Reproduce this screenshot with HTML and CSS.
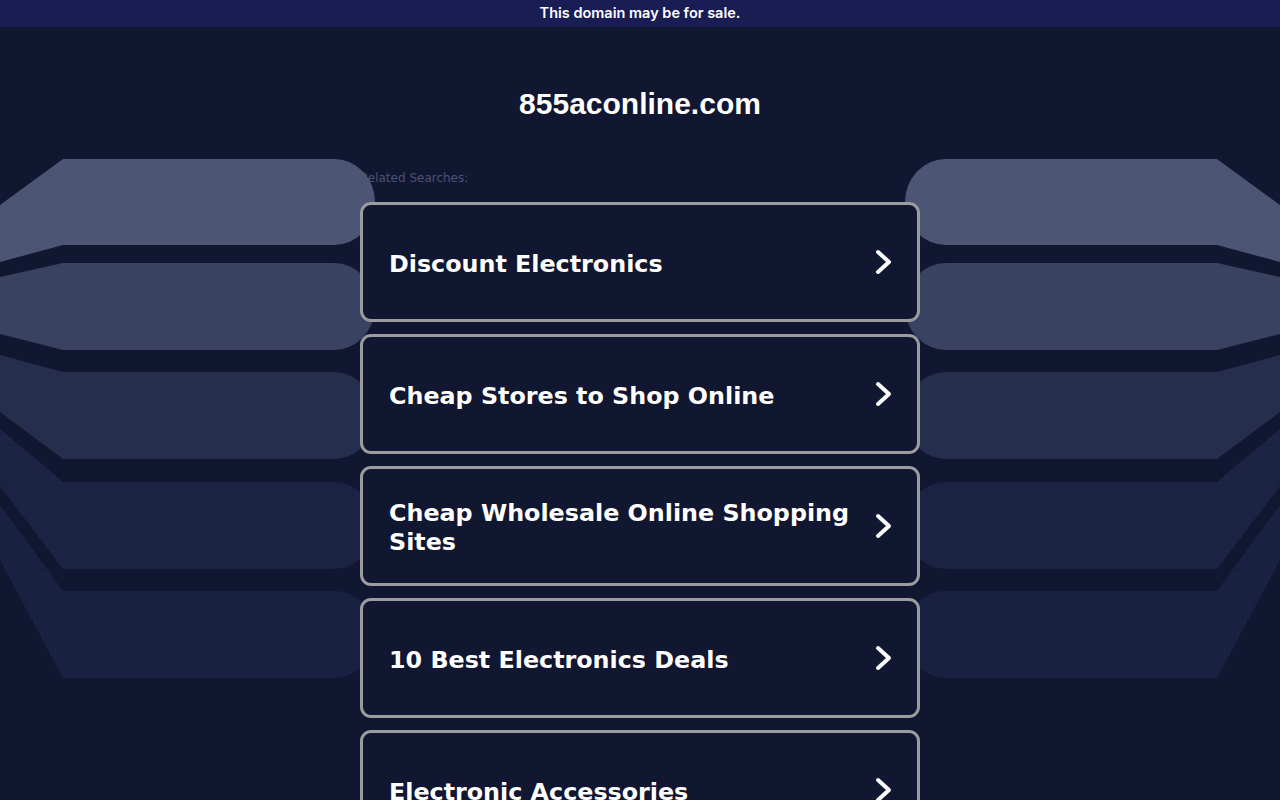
FILE: index.html
```html
<!DOCTYPE html>
<html lang="en">
<head>
<meta charset="utf-8">
<title>855aconline.com</title>
<link rel="stylesheet" href="styles.css">
</head>
<body>
<div class="banner">This domain may be for sale.</div>

<svg class="backdrop" width="1280" height="800" viewBox="0 0 1280 800" aria-hidden="true">
  <defs>
    <pattern id="dots" width="4" height="4" patternUnits="userSpaceOnUse">
      <rect width="4" height="4" fill="#1c2446"/>
      <circle cx="1" cy="1" r="0.7" fill="#141a37"/>
    </pattern>
    <pattern id="dots2" width="4" height="4" patternUnits="userSpaceOnUse">
      <rect width="4" height="4" fill="#1a2244"/>
      <circle cx="1" cy="1" r="0.7" fill="#131936"/>
    </pattern>
    <g id="bands">
      <path fill="#4c5674" d="M0,205 L63,159 L334,159 A41,43 0 0 1 334,245 L63,245 L0,262 Z"/>
      <path fill="#3a4261" d="M0,277 L63,263 L334,263 A41,43.5 0 0 1 334,350 L63,350 L0,334 Z"/>
      <path fill="#262e4d" d="M0,355 L63,372 L334,372 A41,43.5 0 0 1 334,459 L63,459 L0,412 Z"/>
      <path fill="url(#dots)" d="M0,429 L63,482 L334,482 A41,43.5 0 0 1 334,569 L63,569 L0,486 Z"/>
      <path fill="url(#dots2)" d="M0,505 L63,591 L334,591 A41,43.5 0 0 1 334,678 L63,678 L0,560 Z"/>
    </g>
  </defs>
  <use href="#bands"/>
  <use href="#bands" transform="translate(1280,0) scale(-1,1)"/>
</svg>

<main class="page">
  <h1 class="domain">855aconline.com</h1>
  <div class="related">Related Searches:</div>
  <div class="list">
    <a class="card" href="#"><span class="label">Discount Electronics</span><svg class="chev" width="18" height="28" viewBox="0 0 18 28"><polyline points="4,4 15,14 4,24"/></svg></a>
    <a class="card" href="#"><span class="label">Cheap Stores to Shop Online</span><svg class="chev" width="18" height="28" viewBox="0 0 18 28"><polyline points="4,4 15,14 4,24"/></svg></a>
    <a class="card" href="#"><span class="label">Cheap Wholesale Online Shopping Sites</span><svg class="chev" width="18" height="28" viewBox="0 0 18 28"><polyline points="4,4 15,14 4,24"/></svg></a>
    <a class="card" href="#"><span class="label">10 Best Electronics Deals</span><svg class="chev" width="18" height="28" viewBox="0 0 18 28"><polyline points="4,4 15,14 4,24"/></svg></a>
    <a class="card" href="#"><span class="label">Electronic Accessories</span><svg class="chev" width="18" height="28" viewBox="0 0 18 28"><polyline points="4,4 15,14 4,24"/></svg></a>
  </div>
</main>
</body>
</html>
```

FILE: styles.css
```css
html, body {
  margin: 0;
  padding: 0;
}
body {
  background: #111730;
  color: #ffffff;
  font-family: "DejaVu Sans", Verdana, sans-serif;
  position: relative;
  min-height: 800px;
  overflow: hidden;
}
.banner {
  box-sizing: border-box;
  height: 27px;
  padding-bottom: 2px;
  background: #191d54;
  color: #ffffff;
  font-family: Inter, "Open Sans", sans-serif;
  font-weight: 600;
  font-size: 14.5px;
  display: flex;
  align-items: center;
  justify-content: center;
  position: relative;
  z-index: 3;
}
.backdrop {
  position: absolute;
  top: 0;
  left: 0;
  z-index: 1;
}
.page {
  width: 560px;
  margin: 0 auto;
}
.domain {
  margin: 0;
  padding-top: 60px;
  font-family: "Liberation Sans", Arial, sans-serif;
  font-weight: 700;
  font-size: 30px;
  line-height: 34px;
  text-align: center;
  color: #ffffff;
  position: relative;
  z-index: 2;
}
.related {
  margin-top: 50px;
  font-size: 12px;
  line-height: 14px;
  color: #4a5273;
}
.list {
  margin-top: 17px;
  display: flex;
  flex-direction: column;
  gap: 12px;
  position: relative;
  z-index: 2;
}
.card {
  box-sizing: border-box;
  height: 120px;
  border: 3px solid #9c9c9e;
  border-radius: 11px;
  background: #111730;
  display: flex;
  align-items: center;
  gap: 16px;
  padding: 0 25px 0 26px;
  color: #ffffff;
  text-decoration: none;
}
.label {
  flex: 1;
  padding-top: 4px;
  font-weight: 700;
  font-size: 23.8px;
  line-height: 29px;
}
.chev {
  flex: none;
  fill: none;
  stroke: #ffffff;
  stroke-width: 4;
  stroke-linecap: round;
  stroke-linejoin: round;
}
```
